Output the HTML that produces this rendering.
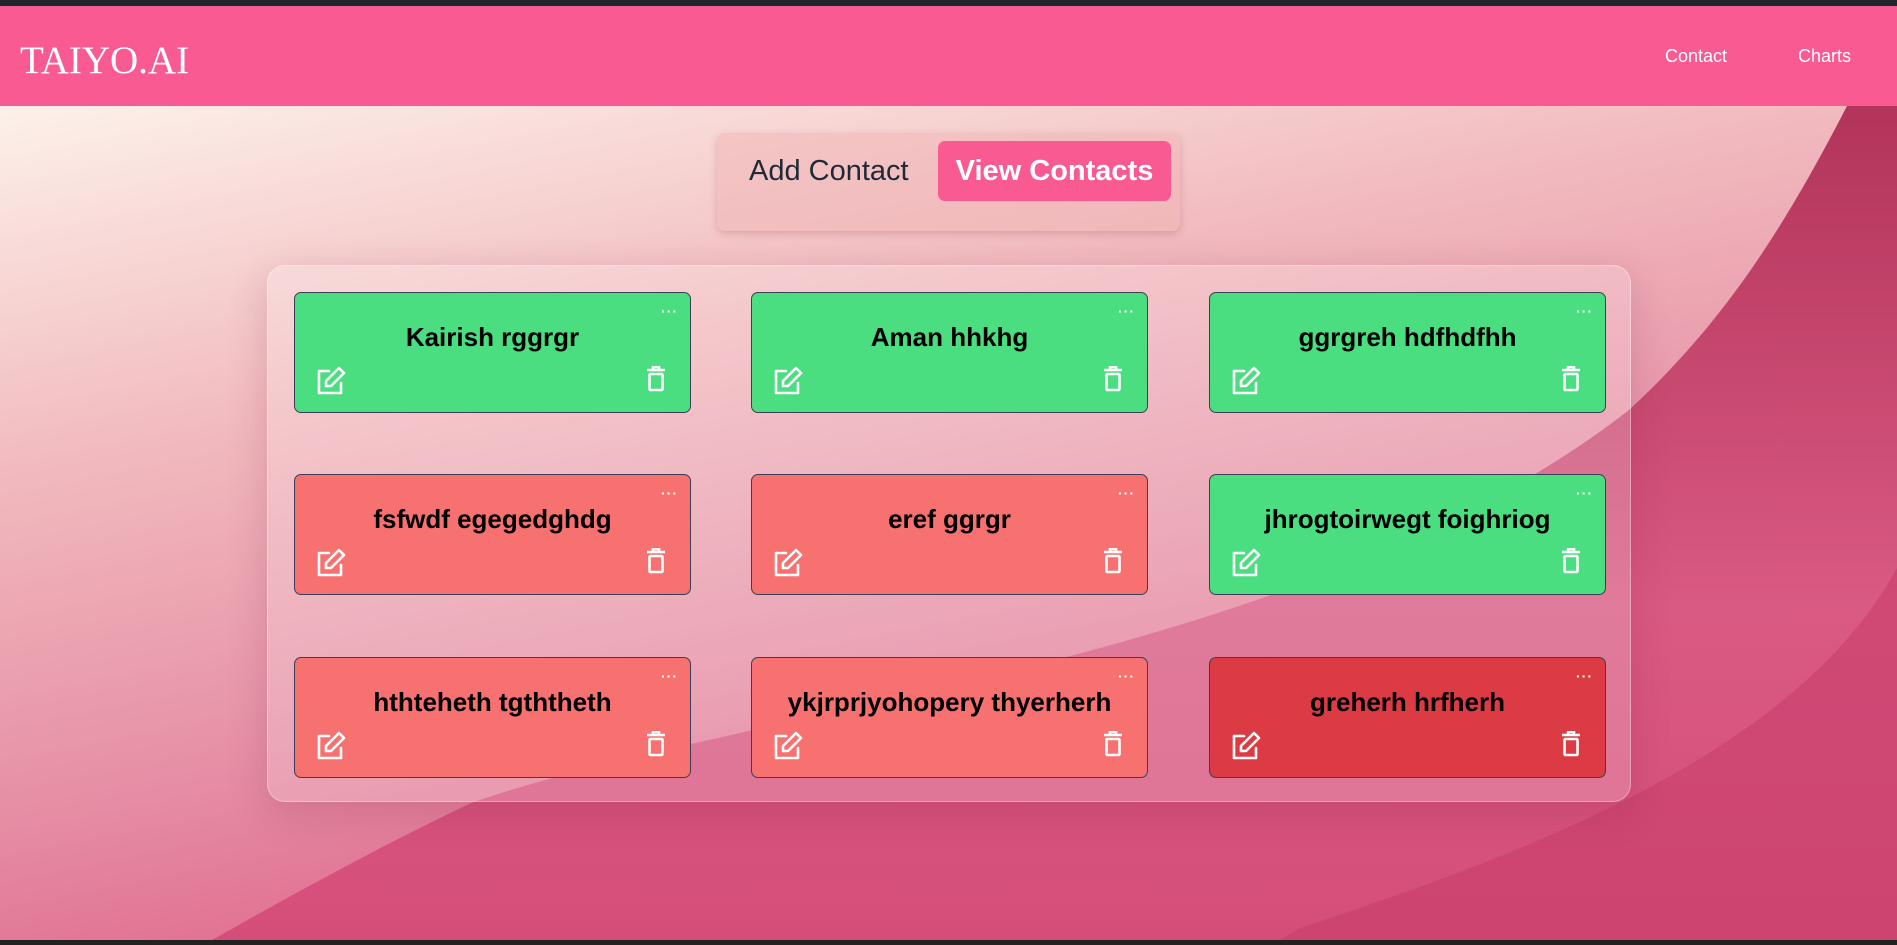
<!DOCTYPE html>
<html><head><meta charset="utf-8"><style>
*{margin:0;padding:0;box-sizing:border-box}
body{width:1897px;height:945px;overflow:hidden;font-family:"Liberation Sans",sans-serif;background:#222;position:relative}
.top{position:absolute;left:0;top:0;width:1897px;height:6px;background:#212529}
.nav{position:absolute;left:0;top:6px;width:1897px;height:100px;background:#f85a91}
.logo{position:absolute;left:20px;top:32px;font-family:"Liberation Serif",serif;font-size:39px;color:#fff}
.nl{position:absolute;top:40px;font-size:18px;color:#fff}
.bg{position:absolute;left:0;top:106px;width:1897px;height:834px}
.bot{position:absolute;left:0;top:940px;width:1897px;height:5px;background:#222}
.tabs{position:absolute;left:717px;top:133px;width:463px;height:98px;border-radius:8px;background:rgba(240,180,180,.5);box-shadow:0 3px 8px rgba(150,60,80,.25)}
.add{position:absolute;left:32px;top:22px;font-size:29px;color:#1f2937}
.view{position:absolute;left:221px;top:8px;width:233px;height:60px;border-radius:7px;background:#f85a91;color:#fff;font-size:29px;font-weight:bold;text-align:center;line-height:60px}
.box{position:absolute;left:267px;top:265px;width:1364px;height:537px;border-radius:18px;background:rgba(255,255,255,.2);border:1px solid rgba(255,255,255,.35);box-shadow:0 10px 40px rgba(120,30,60,.2)}
.card{position:absolute;width:397px;height:121px;border-radius:7px;border:1px solid #3b3f55}
.g{background:#4ade80}.r{background:#f87171}.d{background:#dc3b44}
.t{position:absolute;left:0;right:0;top:29px;text-align:center;font-size:26px;font-weight:bold;color:#000;white-space:nowrap}
.dots{position:absolute;right:12px;top:10px;color:#fff;font-size:14px;font-weight:bold;letter-spacing:1px}
.e{position:absolute;left:20px;top:72px}
.x{position:absolute;left:351px;top:73px}
</style></head><body>
<div class="top"></div>
<div class="nav"><div class="logo">TAIYO.AI</div><div class="nl" style="left:1665px">Contact</div><div class="nl" style="left:1798px">Charts</div></div>
<svg class="bg" viewBox="0 0 1897 834" preserveAspectRatio="none">
<defs>
<linearGradient id="a" x1="0" y1="0" x2=".45" y2="1"><stop offset="0" stop-color="#fdf1ea"/><stop offset=".35" stop-color="#f2bcc0"/><stop offset=".7" stop-color="#e68fa5"/><stop offset="1" stop-color="#de5f86"/></linearGradient>
<linearGradient id="c" x1="0" y1="0" x2="0" y2="1"><stop offset="0" stop-color="#b3345b"/><stop offset=".6" stop-color="#d95a82"/><stop offset="1" stop-color="#d54e7a"/></linearGradient>
</defs>
<rect width="1897" height="834" fill="url(#a)"/>
<path d="M1847 0 C1780 130 1720 220 1629 304 C1300 560 750 600 471 697 C380 740 290 790 212 834 L1897 834 L1897 0 Z" fill="url(#c)"/>
<path d="M1897 462 C1800 640 1550 740 1300 822 L1280 834 L1897 834 Z" fill="#c83c6a" opacity=".55"/>
</svg>
<div class="bot"></div>
<div class="tabs"><div class="add">Add Contact</div><div class="view">View Contacts</div></div>
<div class="box"></div>

<div id="cards"></div>
<script>
const data=[["Kairish rggrgr","g"],["Aman hhkhg","g"],["ggrgreh hdfhdfhh","g"],["fsfwdf egegedghdg","r"],["eref ggrgr","r"],["jhrogtoirwegt foighriog","g"],["hthteheth tgththeth","r"],["ykjrprjyohopery thyerherh","r"],["greherh hrfherh","d"]];
const xs=[294,751,1209],ys=[292,474,657];let h="";
data.forEach((d,i)=>{h+=`<div class="card ${d[1]}" style="left:${xs[i%3]}px;top:${ys[Math.floor(i/3)]}px"><div class="dots">···</div><div class="t">${d[0]}</div>
<svg class="e" width="32" height="32" viewBox="0 0 32 32" fill="none" stroke="#fff" stroke-width="2.6" stroke-linecap="round" stroke-linejoin="round"><path d="M14 6H4v22h22V18"/><path d="M24 3l5 5-13 13h-5v-5z"/></svg>
<svg class="x" width="20" height="26" viewBox="0 0 20 26" fill="none" stroke="#fff" stroke-width="2.6"><path d="M1 4h18M7 4V1h6v3"/><rect x="3.5" y="8" width="13" height="16" rx="1"/></svg></div>`});
document.getElementById("cards").innerHTML=h;
</script>
</body></html>
